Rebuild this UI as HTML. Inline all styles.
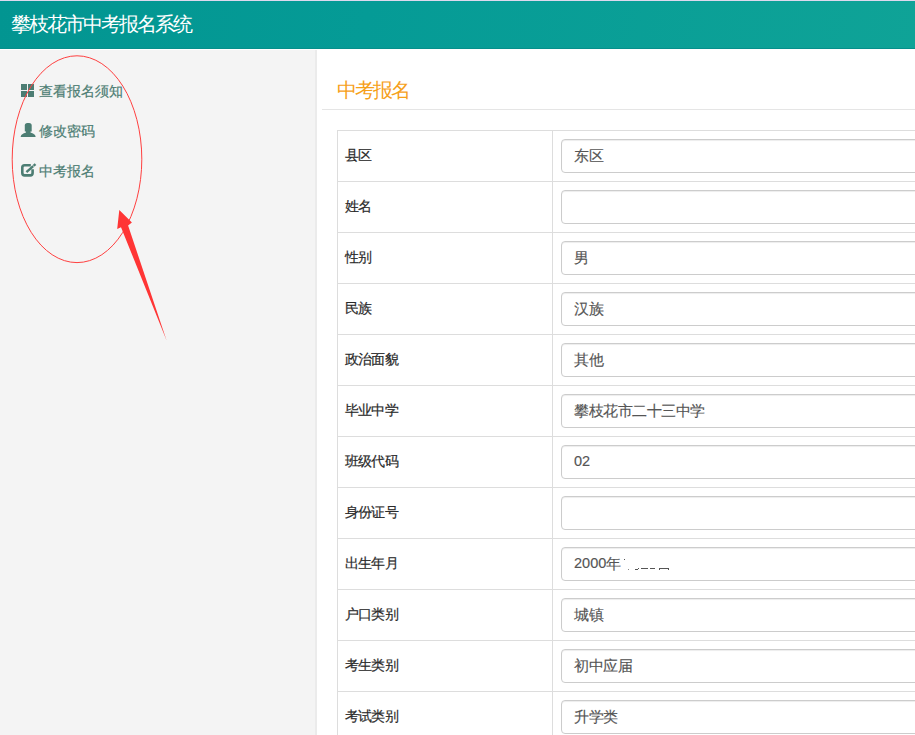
<!DOCTYPE html>
<html><head><meta charset="utf-8">
<style>
*{box-sizing:border-box;margin:0;padding:0}
html,body{width:915px;height:735px;overflow:hidden;background:#fff;font-family:"Liberation Sans",sans-serif}
#top{position:absolute;left:0;top:0;width:915px;height:1px;background:#ddd9ee}
#hdr{position:absolute;left:0;top:1px;width:915px;height:48px;background:linear-gradient(100deg,#029591 0%,#059b96 40%,#0fa397 100%);border-bottom:1px solid #068f8b}
#hdr .t{position:absolute;left:11px;top:11px;font-size:20px;letter-spacing:-2px;line-height:24px;color:#fff;white-space:nowrap}
#side{position:absolute;left:0;top:50px;width:317px;height:685px;background:#f4f4f4;border-right:2px solid #ebebeb}
.nav{position:absolute;left:20px;font-size:14px;line-height:20px;color:#4c7d73;white-space:nowrap;font-weight:500;-webkit-text-stroke:0.2px #4c7d73}
.nav span{position:absolute;left:19px;top:0}
.nav svg{position:absolute;left:0;top:3px}
#main{position:absolute;left:317px;top:50px;width:598px;height:685px;background:#fff}
#ttl{position:absolute;left:337px;top:77.5px;font-size:20px;letter-spacing:-2px;line-height:24px;color:#f6a019;white-space:nowrap}
#hl{position:absolute;left:322px;top:109px;width:593px;height:1px;background:#e5e5e5}
table{position:absolute;left:337px;top:130px;border-collapse:collapse;width:700px}
td{border:1px solid #ddd;padding:8px;height:51px;vertical-align:middle}
td.l{width:215px;font-size:13.8px;letter-spacing:-0.8px;color:#2a2a2a;-webkit-text-stroke:0.2px #2a2a2a;padding-left:7px;padding-bottom:8px;padding-top:8px}
.ip{height:34px;border:1px solid #ccc;border-radius:4px;box-shadow:inset 0 1px 1px rgba(0,0,0,.075);padding:0 12px;font-size:14.5px;letter-spacing:-0.5px;line-height:32px;color:#555;-webkit-text-stroke:0.15px #555;white-space:nowrap}
.d{position:relative;top:-1px;letter-spacing:0}
</style></head><body>
<div id="top"></div>
<div id="hdr"><div class="t">攀枝花市中考报名系统</div></div>
<div id="side">
</div>
<div class="nav" style="top:81px"><span>查看报名须知</span></div>
<div class="nav" style="top:121px"><span>修改密码</span></div>
<div class="nav" style="top:161px"><span>中考报名</span></div>
<svg style="position:absolute;left:0;top:0" width="915" height="735">
<g fill="#4c7d73">
<rect x="21" y="84" width="6" height="6"/><rect x="28" y="84" width="6" height="6"/><rect x="21" y="91" width="6" height="6"/><rect x="28" y="91" width="6" height="6"/>
<path d="M24.8 131.5 V125.6 Q24.8 123 27.4 123 H29.1 Q31.7 123 31.7 125.6 V131.5 Z"/>
<path d="M26 131 H30.5 V132.6 L33 133.4 Q35.7 134.8 35.7 137 H20.6 Q20.6 134.8 23.4 133.4 L26 132.6 Z"/>
</g>
<path d="M30.8 165.3 H24.6 Q22.3 165.3 22.3 167.6 V173.1 Q22.3 175.4 24.6 175.4 H30.3 Q32.6 175.4 32.6 173.1 V169.3" fill="none" stroke="#4c7d73" stroke-width="2.6"/>
<path d="M26.4 172.2 L35.5 164.2" stroke="#4c7d73" stroke-width="2.4"/>
<path d="M32.6 165.2 L34.6 167.2" stroke="#f4f4f4" stroke-width="0.8"/>
</svg>
<div id="main"></div>
<div id="ttl">中考报名</div>
<div id="hl"></div>
<table>
<tr><td class="l">县区</td><td><div class="ip">东区</div></td></tr>
<tr><td class="l">姓名</td><td><div class="ip"></div></td></tr>
<tr><td class="l">性别</td><td><div class="ip">男</div></td></tr>
<tr><td class="l">民族</td><td><div class="ip">汉族</div></td></tr>
<tr><td class="l">政治面貌</td><td><div class="ip">其他</div></td></tr>
<tr><td class="l">毕业中学</td><td><div class="ip">攀枝花市二十三中学</div></td></tr>
<tr><td class="l">班级代码</td><td><div class="ip"><span class="d">02</span></div></td></tr>
<tr><td class="l">身份证号</td><td><div class="ip"></div></td></tr>
<tr><td class="l">出生年月</td><td><div class="ip"><span class="d">2000</span>年</div></td></tr>
<tr><td class="l">户口类别</td><td><div class="ip">城镇</div></td></tr>
<tr><td class="l">考生类别</td><td><div class="ip">初中应届</div></td></tr>
<tr><td class="l">考试类别</td><td><div class="ip">升学类</div></td></tr>
</table>
<svg style="position:absolute;left:0;top:0" width="915" height="735">
<ellipse cx="77" cy="159.2" rx="64.8" ry="103.4" fill="none" stroke="#ff4040" stroke-width="1"/>
<path d="M119.3 209.9 L131.9 222.4 L128.1 225.5 L166.6 340.5 L121 227.2 L117.2 228.9 Z" fill="#ff3535"/>
<g fill="#555">
<rect x="624" y="559" width="1" height="1"/>
<rect x="628" y="569" width="1" height="1" fill="#888"/>
<rect x="635" y="569" width="3" height="1"/><rect x="638" y="568" width="1" height="1"/>
<rect x="641" y="568" width="7" height="1"/>
<rect x="650" y="568" width="5" height="1"/>
<rect x="659" y="568" width="10" height="1"/><rect x="659" y="569" width="1" height="1"/><rect x="668" y="569" width="1" height="1"/>
</g>
</svg>
</body></html>
